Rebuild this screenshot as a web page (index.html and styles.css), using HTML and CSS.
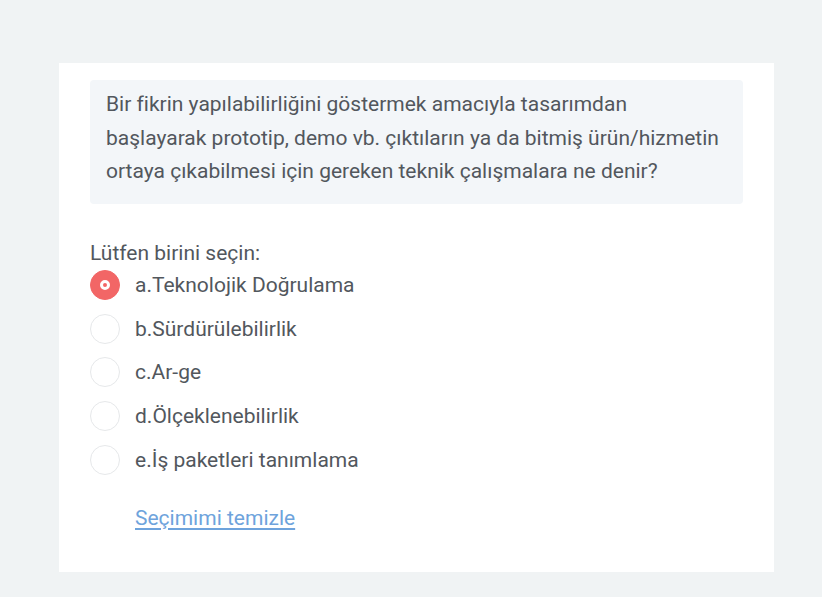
FILE: index.html
```html
<!DOCTYPE html>
<html lang="tr">
<head>
<meta charset="utf-8">
<link rel="stylesheet" href="styles.css">
</head>
<body>
<div class="card">
  <div class="question">Bir fikrin yapılabilirliğini göstermek amacıyla tasarımdan başlayarak prototip, demo vb. çıktıların ya da bitmiş ürün/hizmetin ortaya çıkabilmesi için gereken teknik çalışmalara ne denir?</div>
  <div class="prompt">Lütfen birini seçin:</div>
  <div class="options">
    <div class="option"><span class="radio checked"></span><span class="label">a.Teknolojik Doğrulama</span></div>
    <div class="option"><span class="radio"></span><span class="label">b.Sürdürülebilirlik</span></div>
    <div class="option"><span class="radio"></span><span class="label">c.Ar-ge</span></div>
    <div class="option"><span class="radio"></span><span class="label">d.Ölçeklenebilirlik</span></div>
    <div class="option"><span class="radio"></span><span class="label">e.İş paketleri tanımlama</span></div>
  </div>
  <a class="clear" href="#">Seçimimi temizle</a>
</div>
</body>
</html>
```
FILE: styles.css
```css
html, body {
  margin: 0;
  padding: 0;
  background: #f0f3f4;
}
body {
  font-family: Roboto, "Liberation Sans", sans-serif;
  color: #52575d;
  font-size: 21px;
  padding: 63px 0 0 59px;
}
.card {
  background: #ffffff;
  width: 715px;
  height: 509px;
  box-sizing: border-box;
  padding: 17px 31px 0 31px;
}
.question {
  background: #f3f6f9;
  border-radius: 4px;
  padding: 8px 16px 17px 16px;
  line-height: 33.5px;
  height: 124px;
  box-sizing: border-box;
}
.prompt {
  margin-top: 36px;
  line-height: 26px;
}
.options {
  display: flex;
  flex-direction: column;
  margin-top: -3px;
}
.option {
  display: flex;
  align-items: center;
  height: 43.75px;
  gap: 15px;
}
.radio {
  width: 30px;
  height: 30px;
  box-sizing: border-box;
  border-radius: 50%;
  border: 1px solid #e6e8ea;
  background: #fff;
  flex: none;
  position: relative;
}
.radio.checked {
  background: #f26666;
  border-color: #f26666;
}
.radio.checked::after {
  content: "";
  position: absolute;
  left: 50%;
  top: 50%;
  width: 4px;
  height: 4px;
  margin: -5px 0 0 -5px;
  border: 3px solid #fff;
  border-radius: 50%;
  background: #f26666;
}
.clear {
  display: inline-block;
  margin-top: 24px;
  margin-left: 45px;
  color: #6ea3dc;
  text-decoration: underline;
  text-underline-offset: 3px;
}
```
